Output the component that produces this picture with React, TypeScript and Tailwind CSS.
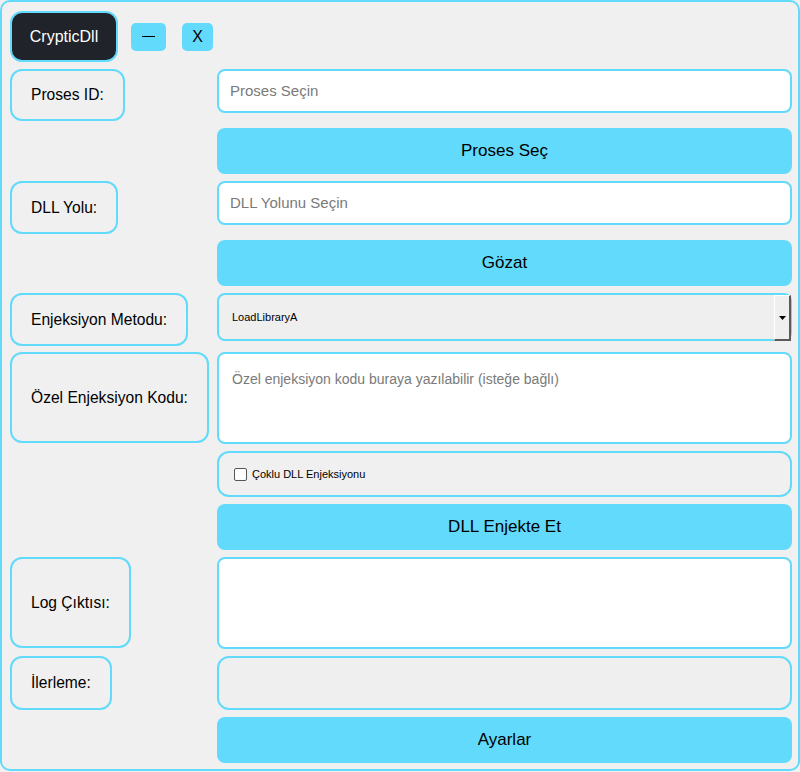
import React from "react"

const font = { fontFamily: '"Liberation Sans", Arial, sans-serif' }

function Label({ text, h }: { text: string; h: string }) {
    return (
        <div className={`${h} flex items-center justify-center rounded-[12px] border-2 border-[#61dafb] px-[19px] text-[15.6px] text-black whitespace-nowrap`}>
            {text}
        </div>
    )
}

function Row({ label, labelH, rowH, children }: { label?: string; labelH?: string; rowH: string; children: React.ReactNode }) {
    return (
        <div className={`flex ${rowH}`}>
            <div className="w-[207px] shrink-0 flex items-start">
                {label && labelH ? <Label text={label} h={labelH} /> : null}
            </div>
            <div className="flex-1">{children}</div>
        </div>
    )
}

function CyanButton({ text }: { text: string }) {
    return (
        <button className="h-[46px] w-full rounded-[8px] bg-[#61dafb] text-[17px] font-medium text-black">
            {text}
        </button>
    )
}

export default function App() {
    return (
        <div style={font} className="w-[800px] h-[772px] bg-[#f0f0f0]">
            <div className="h-[771px] w-[800px] rounded-[10px] border-2 border-[#61dafb] pl-[8px] pr-[6px] pt-[9px] flex flex-col gap-[7px]">
                {/* title bar */}
                <div className="flex items-center h-[51px]">
                    <div className="h-[51px] w-[108px] rounded-[12px] border-2 border-[#61dafb] bg-[#20232a] text-white text-[16px] flex items-center justify-center">
                        CrypticDll
                    </div>
                    <button className="ml-[13px] h-[28px] w-[35px] rounded-[5px] bg-[#61dafb] flex items-center justify-center">
                        <span className="block w-[13px] h-[1px] bg-black" />
                    </button>
                    <button className="ml-[16px] h-[28px] w-[31px] rounded-[5px] bg-[#61dafb] text-[16px] text-black flex items-center justify-center">
                        X
                    </button>
                </div>

                <Row label="Proses ID:" labelH="h-[52px]" rowH="h-[52px]">
                    <div className="h-[44px] rounded-[8px] border-2 border-[#61dafb] bg-white px-[11px] flex items-center text-[15px] text-[#7a7a7a]">
                        Proses Seçin
                    </div>
                </Row>

                <Row rowH="h-[46px]">
                    <CyanButton text="Proses Seç" />
                </Row>

                <Row label="DLL Yolu:" labelH="h-[53px]" rowH="h-[52px]">
                    <div className="h-[44px] rounded-[8px] border-2 border-[#61dafb] bg-white px-[11px] flex items-center text-[15px] text-[#7a7a7a]">
                        DLL Yolunu Seçin
                    </div>
                </Row>

                <Row rowH="h-[46px]">
                    <CyanButton text="Gözat" />
                </Row>

                <Row label="Enjeksiyon Metodu:" labelH="h-[53px]" rowH="h-[52px]">
                    <div className="relative h-[48px] rounded-[8px] border-2 border-[#61dafb] bg-[#efefef] px-[13px] flex items-center text-[11px] text-black">
                        LoadLibraryA
                        <div className="absolute right-[-1px] top-0 h-[46px] w-[17px] border-t border-l border-t-white border-l-white border-r-2 border-b-2 border-r-[#5a5a5a] border-b-[#5a5a5a] bg-[#efefef] flex items-center justify-center">
                            <svg width="7" height="4" viewBox="0 0 7 4">
                                <path d="M0 0h7L3.5 4z" fill="#000" />
                            </svg>
                        </div>
                    </div>
                </Row>

                <Row label="Özel Enjeksiyon Kodu:" labelH="h-[91px]" rowH="h-[92px]">
                    <div className="h-[92px] rounded-[8px] border-2 border-[#61dafb] bg-white px-[13px] pt-[15px] text-[14px] text-[#7a7a7a]">
                        Özel enjeksiyon kodu buraya yazılabilir (isteğe bağlı)
                    </div>
                </Row>

                <Row rowH="h-[46px]">
                    <div className="h-[46px] rounded-[12px] border-2 border-[#61dafb] bg-[#f0f0f0] px-[15px] flex items-center gap-[5px] text-[11px] text-black">
                        <span className="block h-[13px] w-[13px] rounded-[2px] border border-[#555] bg-white" />
                        Çoklu DLL Enjeksiyonu
                    </div>
                </Row>

                <Row rowH="h-[46px]">
                    <CyanButton text="DLL Enjekte Et" />
                </Row>

                <Row label="Log Çıktısı:" labelH="h-[91px]" rowH="h-[92px]">
                    <div className="h-[92px] rounded-[8px] border-2 border-[#61dafb] bg-white" />
                </Row>

                <Row label="İlerleme:" labelH="h-[54px]" rowH="h-[54px]">
                    <div className="h-[54px] rounded-[12px] border-2 border-[#61dafb] bg-[#efefef]" />
                </Row>

                <Row rowH="h-[46px]">
                    <CyanButton text="Ayarlar" />
                </Row>
            </div>
        </div>
    )
}
